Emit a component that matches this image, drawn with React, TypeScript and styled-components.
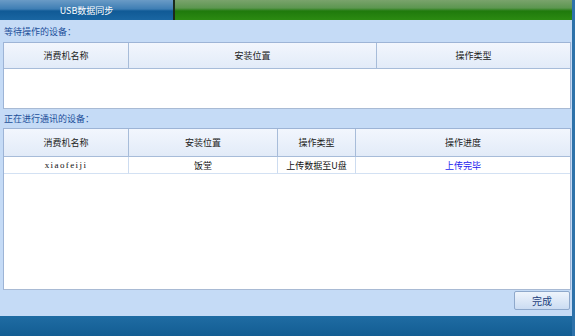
import React from "react";
import styled, { createGlobalStyle } from "styled-components";

const Global = createGlobalStyle`
  html, body { margin: 0; padding: 0; width: 575px; height: 336px; overflow: hidden; }
  body { font-family: "Noto Sans CJK SC", "Noto Sans", sans-serif; }
  * { box-sizing: border-box; }
`;

const Page = styled.div`
  width: 575px;
  height: 336px;
  display: flex;
  background: #2d72aa;
`;

const Main = styled.div`
  width: 572px;
  height: 336px;
  display: flex;
  flex-direction: column;
`;

const TopBar = styled.div`
  height: 20px;
  display: flex;
`;

const Tab = styled.div`
  width: 173px;
  display: flex;
  align-items: center;
  justify-content: center;
  color: #fff;
  font-size: 9px;
  background: linear-gradient(#6a9bc6 0%, #3e7eb4 45%, #105a96 55%, #1a66a2 100%);
`;

const Sep = styled.div`
  width: 2px;
  background: #1c2a1c;
`;

const GreenBar = styled.div`
  flex: 1;
  background: linear-gradient(#7aa36c 0%, #5c9650 40%, #1f7a0c 55%, #2c8a12 100%);
`;

const Body = styled.div`
  flex: 1;
  background: #c5dbf6;
  display: flex;
  flex-direction: column;
  padding: 0 1px 0 3px;
`;

const Label = styled.div<{ $h: number }>`
  height: ${(p) => p.$h}px;
  display: flex;
  align-items: center;
  padding-left: 1px;
  font-size: 9px;
  color: #1c4f9a;
`;

const Table = styled.div<{ $h: number; $cols: string }>`
  height: ${(p) => p.$h}px;
  border: 1px solid #9db4d6;
  border-bottom-color: #a8bad4;
  background: #fff;
  display: grid;
  grid-template-columns: ${(p) => p.$cols};
  grid-auto-rows: min-content;
  align-content: start;
`;

const HeadCell = styled.div<{ $h: number; $last?: boolean }>`
  height: ${(p) => p.$h}px;
  display: flex;
  align-items: center;
  justify-content: center;
  font-size: 9px;
  color: #222;
  background: linear-gradient(#f2f6fd, #e2ebf8);
  border-right: ${(p) => (p.$last ? "none" : "1px solid #a7bcd9")};
  border-bottom: 1px solid #a7bcd9;
`;

const Cell = styled.div<{ $last?: boolean; $blue?: boolean; $mono?: boolean }>`
  height: 17px;
  display: flex;
  align-items: center;
  justify-content: center;
  font-size: 9px;
  font-family: ${(p) =>
    p.$mono ? '"Liberation Serif", serif' : '"Noto Sans CJK SC", sans-serif'};
  letter-spacing: ${(p) => (p.$mono ? "1.4px" : "0")};
  color: ${(p) => (p.$blue ? "#1a1aee" : "#111")};
  border-right: ${(p) => (p.$last ? "none" : "1px solid #cddcf0")};
  border-bottom: 1px solid #d3e1f3;
`;

const Footer = styled.div`
  height: 26px;
  display: flex;
  justify-content: flex-end;
  align-items: flex-start;
  padding-top: 1px;
`;

const Button = styled.button`
  width: 56px;
  height: 19px;
  margin-right: 1px;
  border: 1px solid #8ea8cb;
  border-radius: 2px;
  background: linear-gradient(#eef4fc, #cbdcf2);
  color: #1d3f7c;
  font-family: "Noto Sans CJK SC", sans-serif;
  font-size: 10px;
  padding: 0;
`;

const BottomBar = styled.div`
  height: 20px;
  background: linear-gradient(#1f6ca3, #135d93);
`;

export default function App() {
  return (
    <>
      <Global />
      <Page>
        <Main>
          <TopBar>
            <Tab>USB数据同步</Tab>
            <Sep />
            <GreenBar />
          </TopBar>
          <Body>
            <Label $h={22}>等待操作的设备：</Label>
            <Table $h={67} $cols="125px 248px 1fr">
              <HeadCell $h={26}>消费机名称</HeadCell>
              <HeadCell $h={26}>安装位置</HeadCell>
              <HeadCell $h={26} $last>操作类型</HeadCell>
            </Table>
            <Label $h={19}>正在进行通讯的设备：</Label>
            <Table $h={162} $cols="125px 149px 78px 1fr">
              <HeadCell $h={28}>消费机名称</HeadCell>
              <HeadCell $h={28}>安装位置</HeadCell>
              <HeadCell $h={28}>操作类型</HeadCell>
              <HeadCell $h={28} $last>操作进度</HeadCell>
              <Cell $mono>xiaofeiji</Cell>
              <Cell>饭堂</Cell>
              <Cell>上传数据至U盘</Cell>
              <Cell $last $blue>上传完毕</Cell>
            </Table>
            <Footer>
              <Button>完成</Button>
            </Footer>
          </Body>
          <BottomBar />
        </Main>
      </Page>
    </>
  );
}
